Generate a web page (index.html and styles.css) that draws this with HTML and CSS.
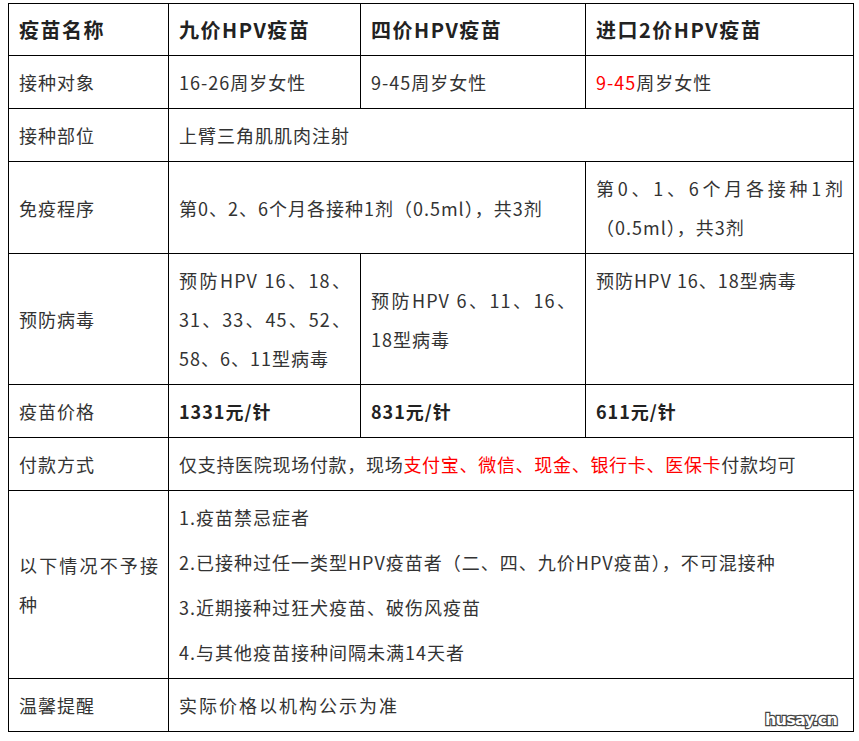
FILE: index.html
```html
<!DOCTYPE html>
<html lang="zh-CN">
<head>
<meta charset="utf-8">
<title>HPV疫苗</title>
<link rel="stylesheet" href="styles.css">
</head>
<body>
<div class="page">
<table class="vax">
  <colgroup>
    <col class="c1"><col class="c2"><col class="c3"><col class="c4">
  </colgroup>
  <thead>
    <tr class="head">
      <th>疫苗名称</th>
      <th>九价HPV疫苗</th>
      <th>四价HPV疫苗</th>
      <th>进口2价HPV疫苗</th>
    </tr>
  </thead>
  <tbody>
    <tr>
      <td>接种对象</td>
      <td>16-26周岁女性</td>
      <td>9-45周岁女性</td>
      <td><span class="red">9-45</span>周岁女性</td>
    </tr>
    <tr>
      <td>接种部位</td>
      <td colspan="3">上臂三角肌肌肉注射</td>
    </tr>
    <tr>
      <td>免疫程序</td>
      <td colspan="2">第0、2、6个月各接种1剂（0.5ml），共3剂</td>
      <td class="just">第0、1、6个月各接种1剂（0.5ml），共3剂</td>
    </tr>
    <tr>
      <td>预防病毒</td>
      <td class="just">预防HPV 16、18、31、33、45、52、58、6、11型病毒</td>
      <td class="just">预防HPV 6、11、16、18型病毒</td>
      <td class="top">预防HPV 16、18型病毒</td>
    </tr>
    <tr class="price">
      <td>疫苗价格</td>
      <td><b>1331元/针</b></td>
      <td><b>831元/针</b></td>
      <td><b>611元/针</b></td>
    </tr>
    <tr>
      <td>付款方式</td>
      <td colspan="3" class="tight">仅支持医院现场付款，现场<span class="red">支付宝、微信、现金、银行卡、医保卡</span>付款均可</td>
    </tr>
    <tr>
      <td class="just">以下情况不予接种</td>
      <td colspan="3" class="list">
        <p>1.疫苗禁忌症者</p>
        <p>2.已接种过任一类型HPV疫苗者（二、四、九价HPV疫苗），不可混接种</p>
        <p>3.近期接种过狂犬疫苗、破伤风疫苗</p>
        <p>4.与其他疫苗接种间隔未满14天者</p>
      </td>
    </tr>
    <tr>
      <td>温馨提醒</td>
      <td colspan="3" class="wide">实际价格以机构公示为准</td>
    </tr>
  </tbody>
</table>
<div class="mark">husay.cn</div>
</div>
</body>
</html>
```

FILE: styles.css
```css
html, body {
  margin: 0;
  padding: 0;
  background: #ffffff;
}

.page {
  position: relative;
  width: 859px;
  height: 741px;
  padding: 3px 0 0 8px;
  box-sizing: border-box;
}

.vax {
  border-collapse: collapse;
  table-layout: fixed;
  width: 845px;
  font-family: "Noto Sans CJK SC", "Noto Sans", sans-serif;
  font-size: 18px;
  line-height: 39px;
  letter-spacing: 1px;
  color: #333333;
}

.c1 { width: 160px; }
.c2 { width: 192px; }
.c3 { width: 225px; }
.c4 { width: 268px; }

.vax th,
.vax td {
  border: 1px solid #000000;
  padding: 7px 9px 6px 10px;
  text-align: left;
  vertical-align: middle;
  font-weight: normal;
  word-break: normal;
}

.vax .head th {
  font-size: 20px;
  font-weight: bold;
  letter-spacing: 1.5px;
  color: #222222;
  padding-top: 6px;
  padding-bottom: 6px;
}

.vax td.just {
  text-align: justify;
}

.vax td.top {
  vertical-align: top;
}

.price b {
  font-weight: bold;
  color: #222222;
}

.red {
  color: #ff0000;
}

.list p {
  margin: 0 0 6px 0;
}

.list p:last-child {
  margin-bottom: 0;
}

.tight {
  letter-spacing: 0.7px;
}

.wide {
  letter-spacing: 2px;
}

.mark {
  position: absolute;
  left: 765px;
  top: 710px;
  font-family: "DejaVu Sans", sans-serif;
  font-weight: bold;
  font-size: 16px;
  letter-spacing: -0.8px;
  color: #ffffff;
  -webkit-text-stroke: 2.4px #444444;
  paint-order: stroke fill;
}
```
